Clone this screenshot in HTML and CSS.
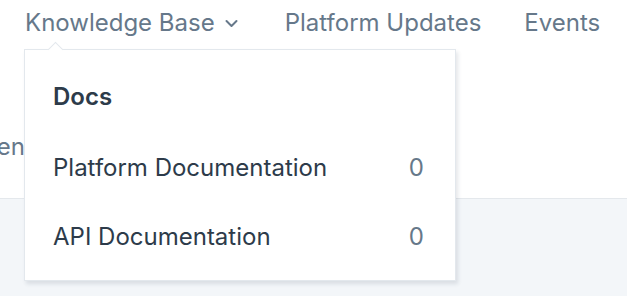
FILE: index.html
```html
<!DOCTYPE html>
<html lang="en">
  <head>
    <meta charset="UTF-8">
    <title>Knowledge Base</title>
    <link rel="stylesheet" href="styles.css">
  </head>
  <body>
    <div class="header">
      <nav class="nav">
        <div class="nav-item has-menu">
          <span>Knowledge Base</span>
          <svg class="chevron" width="13" height="9" viewBox="0 0 13 9">
            <path d="M1.5 2 L6.5 7 L11.5 2" fill="none" stroke="#66788a" stroke-width="2" stroke-linecap="round" stroke-linejoin="round"/>
          </svg>
          <div class="menu">
            <div class="menu-title">Docs</div>
            <a class="menu-row" href="#"><span>Platform Documentation</span><span class="count">0</span></a>
            <a class="menu-row" href="#"><span>API Documentation</span><span class="count">0</span></a>
          </div>
        </div>
        <div class="nav-item">Platform Updates</div>
        <div class="nav-item">Events</div>
      </nav>
      <div class="subnav">
        <span class="tab">Screen</span>
      </div>
    </div>
    <div class="page"></div>
  </body>
</html>
```

FILE: styles.css
```css
body {
  margin: 0;
  padding: 0;
  font-family: 'Inter', 'Noto Sans', sans-serif;
  background: #f3f6f9;
  height: 296px;
  overflow: hidden;
}

.header {
  position: relative;
  height: 198px;
  background: #fff;
  border-bottom: 1px solid #e4e8ec;
}

.nav {
  display: flex;
  align-items: center;
  gap: 43px;
  padding: 8px 0 0 25px;
  height: 28px;
}

.nav-item {
  display: flex;
  align-items: center;
  gap: 10px;
  color: #66788a;
  font-size: 24px;
  white-space: nowrap;
}

.has-menu {
  margin-right: 4px;
}

.chevron {
  margin-top: 2px;
}

.menu {
  position: absolute;
  top: 49px;
  left: 24px;
  width: 430px;
  padding-bottom: 9px;
  background: #fff;
  border: 1px solid #e3e8ed;
  box-shadow: 2px 3px 4px rgba(30, 50, 70, 0.12);
  z-index: 2;
}

.menu::before {
  content: "";
  position: absolute;
  top: -6px;
  left: 25px;
  width: 10px;
  height: 10px;
  background: #fff;
  border-left: 1px solid #e3e8ed;
  border-top: 1px solid #e3e8ed;
  transform: rotate(45deg);
}

.menu-title {
  padding: 32px 28px 0;
  margin-bottom: 21px;
  line-height: 29px;
  color: #2d3b4a;
  font-weight: 600;
  font-size: 24px;
}

.menu-row {
  display: flex;
  justify-content: space-between;
  align-items: center;
  height: 70px;
  padding: 0 31px 0 28px;
  color: #2d3b4a;
  font-size: 24px;
  text-decoration: none;
}

.menu-row + .menu-row {
  margin-top: -1px;
}

.count {
  color: #66788a;
}

.subnav {
  margin-top: 96px;
  margin-left: -55px;
  line-height: 29px;
  color: #66788a;
  font-size: 24px;
}
```
